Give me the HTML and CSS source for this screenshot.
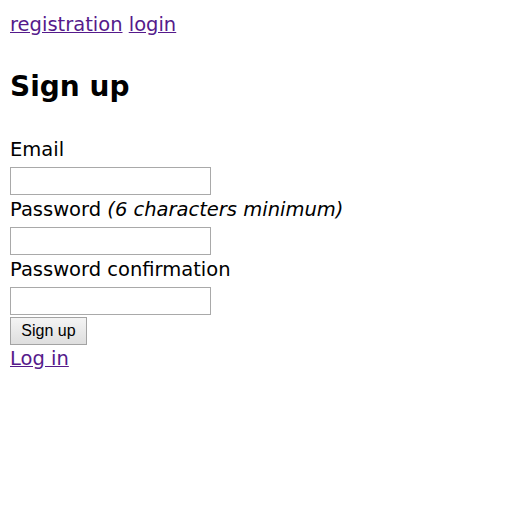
FILE: index.html
```html
<!DOCTYPE html>
<html>
<head>
<meta charset="utf-8">
<title>Sign up</title>
<link rel="stylesheet" href="styles.css">
</head>
<body>
<div class="page">
  <nav class="nav"><a href="#" class="link">registration</a> <a href="#" class="link">login</a></nav>
  <h1 class="title">Sign up</h1>
  <form class="form">
    <div class="field">
      <label class="label">Email</label>
      <input class="input" type="email">
    </div>
    <div class="field">
      <label class="label">Password <em class="hint">(6 characters minimum)</em></label>
      <input class="input" type="password">
    </div>
    <div class="field">
      <label class="label">Password confirmation</label>
      <input class="input" type="password">
    </div>
    <div class="actions">
      <button class="button" type="button">Sign up</button>
    </div>
  </form>
  <div class="footer-link"><a href="#" class="link">Log in</a></div>
</div>
</body>
</html>
```
FILE: styles.css
```css
html, body {
  margin: 0;
  padding: 0;
  background: #ffffff;
}
.page {
  padding: 8px 10px;
  font-family: "DejaVu Sans", sans-serif;
  font-size: 19.5px;
  color: #000000;
}
.link {
  color: #551a8b;
  text-decoration: underline;
}
.nav {
  box-sizing: border-box;
  padding-top: 2px;
  line-height: 30px;
  height: 30px;
}
.title {
  margin: 29px 0 28px 0;
  font-size: 28px;
  line-height: 40px;
  font-weight: bold;
}
.form {
  margin: 0;
}
.field {
  display: flex;
  flex-direction: column;
  align-items: flex-start;
}
.label {
  display: block;
  line-height: 30px;
  height: 30px;
  margin-bottom: 2px;
}
.hint {
  font-style: italic;
}
.input {
  box-sizing: border-box;
  width: 201px;
  height: 28px;
  margin: 0;
  padding: 0 2px;
  border: 1px solid #a9a9a9;
  background: #ffffff;
}
.actions {
  margin-top: 2px;
  height: 28px;
}
.button {
  box-sizing: border-box;
  height: 28px;
  width: 77px;
  margin: 0;
  padding: 0;
  font-family: "Liberation Sans", Arial, sans-serif;
  font-size: 16px;
  color: #000000;
  border: 1px solid #a3a3a3;
  border-radius: 0;
  background: linear-gradient(#f4f4f4, #dedede);
}
.footer-link {
  line-height: 28px;
}
```
